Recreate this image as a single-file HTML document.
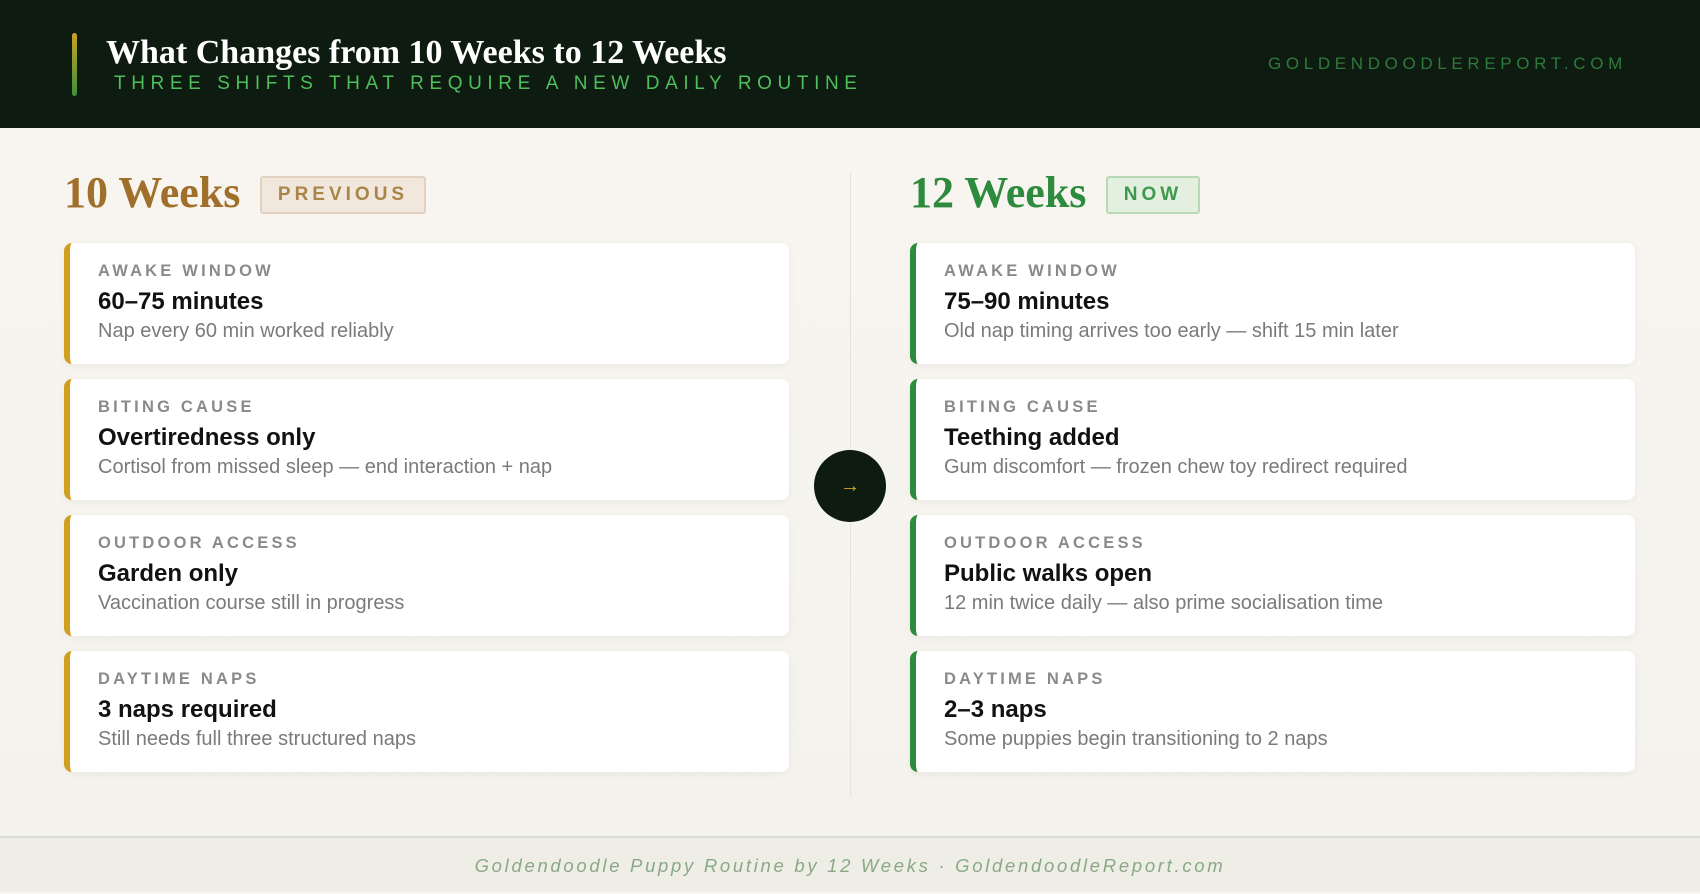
<!DOCTYPE html>
<html><head><meta charset="utf-8"><style>
*{margin:0;padding:0;box-sizing:border-box}
body{width:1700px;height:892px;overflow:hidden;background:linear-gradient(180deg,#f9f6f1 0%,#f4f2ec 100%);font-family:"Liberation Sans",sans-serif;position:relative}
.hdr{position:absolute;left:0;top:0;width:1700px;height:128px;background:#0e1b11}
.bar{position:absolute;left:72px;top:33px;width:5px;height:63px;border-radius:3px;background:linear-gradient(#c9a227,#3d8f3d)}
.title{position:absolute;left:106px;top:34px;font-family:"Liberation Serif",serif;font-weight:bold;font-size:34px;color:#fff;white-space:nowrap}
.sub{position:absolute;left:114px;top:73px;font-size:19px;letter-spacing:5.6px;color:#4fbf5c;white-space:nowrap}
.dom{position:absolute;left:1268px;top:54px;font-size:17px;letter-spacing:4.65px;color:#2f7a3c;white-space:nowrap}
.h{position:absolute;top:167px;font-family:"Liberation Serif",serif;font-weight:bold;font-size:44px;white-space:nowrap}
.badge{position:absolute;top:176px;height:38px;border:2px solid;border-radius:3px;font-weight:bold;font-size:19px;letter-spacing:4px;line-height:34px;text-align:center}
.card{position:absolute;width:725px;height:121px;background:#fff;border-radius:8px;box-shadow:0 2px 8px rgba(0,0,0,.05)}
.card.l{border-left:6px solid #cf9f1d}.card.r{border-left:6px solid #2e8b3e}
.lab{position:absolute;left:28px;top:19px;font-weight:bold;font-size:16.5px;letter-spacing:3.2px;color:#8a8a8a;white-space:nowrap}
.t{position:absolute;left:28px;top:45px;font-weight:bold;font-size:24px;color:#111;white-space:nowrap}
.d{position:absolute;left:28px;top:77px;font-size:20px;color:#7a7a7a;white-space:nowrap}
.div{position:absolute;left:850px;top:173px;width:1px;height:624px;background:#e4e4dc}
.circ{position:absolute;left:814px;top:450px;width:72px;height:72px;border-radius:50%;background:#0e1b11;color:#d9a426;font-size:20px;text-align:center;line-height:72px}
.ft{position:absolute;left:0;top:836px;width:1700px;height:56px;border-top:2px solid #d8e0d2;background:#eeeee6;text-align:center;font-style:italic;font-size:18.5px;letter-spacing:2.7px;color:#8aa886;line-height:56px}
</style></head><body>
<div class="hdr"><div class="bar"></div>
<div class="title">What Changes from 10 Weeks to 12 Weeks</div>
<div class="sub">THREE SHIFTS THAT REQUIRE A NEW DAILY ROUTINE</div>
<div class="dom">GOLDENDOODLEREPORT.COM</div></div>
<div class="h" style="left:64px;color:#a06f2a">10 Weeks</div>
<div class="badge" style="left:260px;width:166px;background:#f1e7dd;border-color:#e2d1c0;color:#a88548">PREVIOUS</div>
<div class="h" style="left:910px;color:#2e8b3e">12 Weeks</div>
<div class="badge" style="left:1106px;width:94px;background:#e3efdf;border-color:#b9d8b6;color:#3d9a4d">NOW</div>
<div class="div"></div>
<div class="card l" style="left:64px;top:243px"><div class="lab">AWAKE WINDOW</div><div class="t">60–75 minutes</div><div class="d">Nap every 60 min worked reliably</div></div>
<div class="card l" style="left:64px;top:379px"><div class="lab">BITING CAUSE</div><div class="t">Overtiredness only</div><div class="d">Cortisol from missed sleep — end interaction + nap</div></div>
<div class="card l" style="left:64px;top:515px"><div class="lab">OUTDOOR ACCESS</div><div class="t">Garden only</div><div class="d">Vaccination course still in progress</div></div>
<div class="card l" style="left:64px;top:651px"><div class="lab">DAYTIME NAPS</div><div class="t">3 naps required</div><div class="d">Still needs full three structured naps</div></div>
<div class="card r" style="left:910px;top:243px"><div class="lab">AWAKE WINDOW</div><div class="t">75–90 minutes</div><div class="d">Old nap timing arrives too early — shift 15 min later</div></div>
<div class="card r" style="left:910px;top:379px"><div class="lab">BITING CAUSE</div><div class="t">Teething added</div><div class="d">Gum discomfort — frozen chew toy redirect required</div></div>
<div class="card r" style="left:910px;top:515px"><div class="lab">OUTDOOR ACCESS</div><div class="t">Public walks open</div><div class="d">12 min twice daily — also prime socialisation time</div></div>
<div class="card r" style="left:910px;top:651px"><div class="lab">DAYTIME NAPS</div><div class="t">2–3 naps</div><div class="d">Some puppies begin transitioning to 2 naps</div></div>
<div class="circ">→</div>
<div class="ft">Goldendoodle Puppy Routine by 12 Weeks · GoldendoodleReport.com</div>
</body></html>
